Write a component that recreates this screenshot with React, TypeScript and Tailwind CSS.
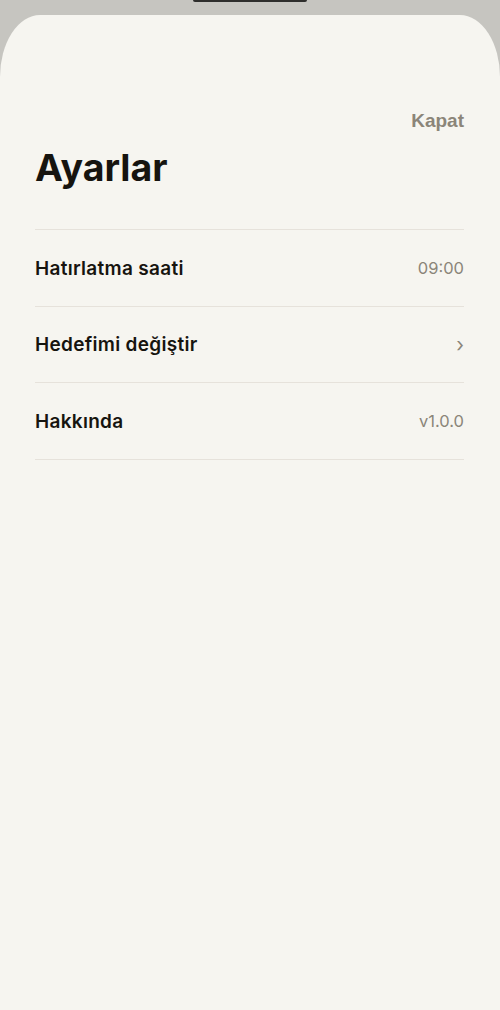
export default function App() {
  const rows = [
    { label: 'Hatırlatma saati', value: '09:00' },
    { label: 'Hedefimi değiştir', value: '›', chevron: true },
    { label: 'Hakkında', value: 'v1.0.0' },
  ]

  return (
    <div className="relative h-[1010px] bg-[#c6c5c0] pt-[15px] overflow-hidden">
      <div className="absolute top-0 left-[193px] w-[114px] h-[2px] rounded-b-full bg-[#2e2e2c]" />
      <div
        className="h-full bg-[#f6f5f0] rounded-tl-[40px_62px] rounded-tr-[40px_62px] pl-[35px] pr-[36px] pt-[95px]"
        style={{ fontFamily: 'Inter, "Noto Sans", sans-serif' }}
      >
        <div className="flex justify-end">
          <button
            className="text-[19px] leading-[22px] font-bold text-[#8b8579]"
            style={{ fontFamily: '"Liberation Sans", Arial, sans-serif' }}
          >
            Kapat
          </button>
        </div>
        <h1 className="mt-[14px] text-[37.5px] leading-[44px] font-bold text-[#16140f]">
          Ayarlar
        </h1>
        <div className="mt-[39px] border-t border-[#e6e2db]">
          {rows.map((r) => (
            <div
              key={r.label}
              className="flex items-center justify-between h-[73.5px] pt-[2px] border-b border-[#e6e2db] box-content"
            >
              <span className="text-[19px] tracking-[0.3px] font-semibold text-[#16140f]">{r.label}</span>
              {r.chevron ? (
                <span className="text-[20px] leading-none text-[#8b8579]">›</span>
              ) : (
                <span className="text-[16.5px] text-[#8b8579]">{r.value}</span>
              )}
            </div>
          ))}
        </div>
      </div>
    </div>
  )
}
